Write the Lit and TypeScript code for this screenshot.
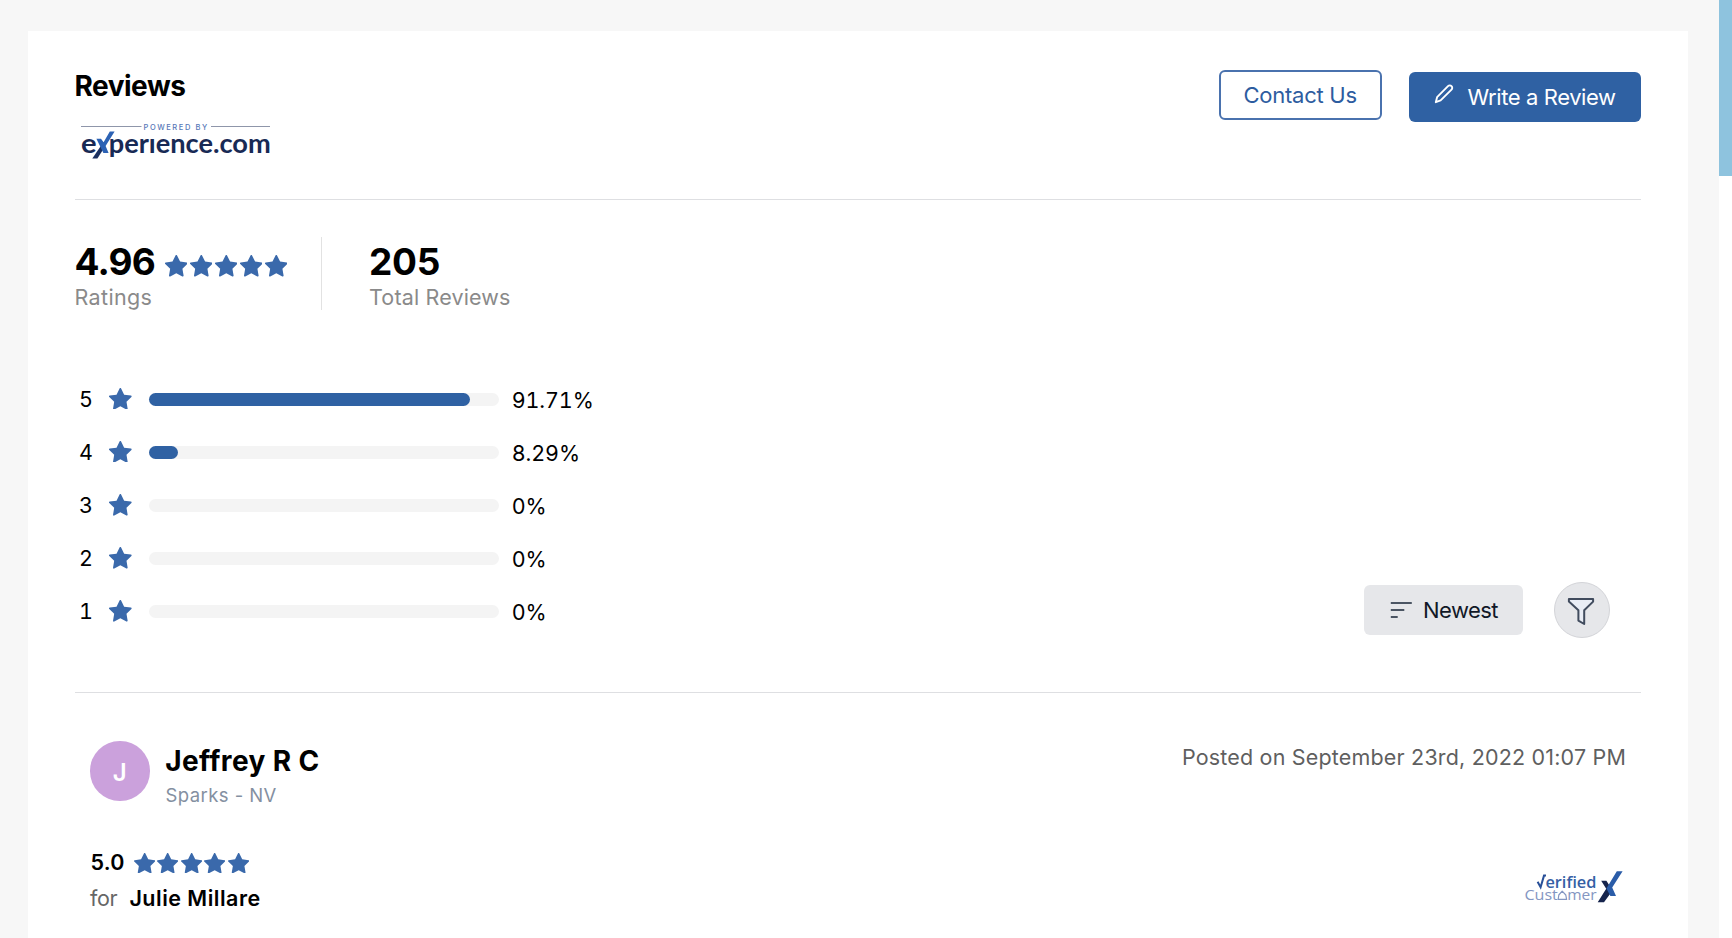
import { LitElement, html, css } from "lit";
import { customElement, property } from "lit/decorators.js";

const STAR_PATH =
  "M908.1 353.1l-253.9-36.9L540.7 86.1c-3.1-6.3-8.2-11.4-14.5-14.5-15.8-7.8-35-1.3-42.9 14.5L369.8 316.2l-253.9 36.9c-7 1-13.4 4.3-18.3 9.3a32.05 32.05 0 00.6 45.3l183.7 179.1-43.4 252.9a31.95 31.95 0 0046.4 33.7L512 754l227.1 119.4c6.2 3.3 13.4 4.4 20.3 3.2 17.4-3 29.1-19.5 26.1-36.9l-43.4-252.9 183.7-179.1c5-4.9 8.3-11.3 9.3-18.3 2.7-17.5-9.5-33.7-27-36.3z";

@customElement("star-row")
class StarRow extends LitElement {
  @property({ type: Number }) count = 1;
  static styles = css`
    :host { display: flex; gap: var(--star-gap, 0); }
    .star { display: block; width: var(--star-size, 22.7px); height: auto; fill: #3a69ab; }
  `;
  render() {
    return Array.from(
      { length: this.count },
      () => html`<svg class="star" viewBox="88 68 848 810"><path d=${STAR_PATH} /></svg>`
    );
  }
}

@customElement("experience-logo")
class ExperienceLogo extends LitElement {
  static styles = css`
    :host { display: block; }
    .logo { display: block; width: 192px; height: 42px; }
    .powered { font: 500 7.5px Inter, sans-serif; letter-spacing: 1.58px; fill: #5878b8; }
    .word { font: 700 26.5px Lato, sans-serif; fill: #182a55; }
    .rule { stroke: #8f96aa; stroke-width: 1; }
    .dark { fill: #1a2f60; }
    .blue { fill: #2c62b4; }
  `;
  render() {
    return html`
      <svg class="logo" viewBox="0 0 192 42">
        <path class="rule" d="M1 8.5H61.5M131 8.5H190" />
        <text class="powered" x="63.5" y="11.8">POWERED BY</text>
        <text class="word" x="1" y="34.8" textLength="15.6" lengthAdjust="spacingAndGlyphs">e</text>
        <text class="word" x="28.7" y="34.8" textLength="162" lengthAdjust="spacingAndGlyphs">perıence.com</text>
        <path class="dark" d="M12.3 40.5L21.8 26.5L24.4 29.5L17.4 40.5Z" />
        <path class="blue" d="M16.4 20.8H21L23.6 24.2L29.8 13.4H34.6L25.6 28L28.6 35H23.4Z" />
      </svg>
    `;
  }
}

@customElement("verified-badge")
class VerifiedBadge extends LitElement {
  static styles = css`
    :host { display: block; }
    .badge { display: block; width: 106px; height: 40px; }
    .verified { font: 600 16px "Open Sans", sans-serif; fill: #3560a5; }
    .customer { font: 400 14.5px "Open Sans", sans-serif; fill: #8496c2; }
    .check { fill: none; stroke: #284f98; stroke-width: 2; }
    .house { fill: none; stroke: #8496c2; stroke-width: 1.2; stroke-linejoin: round; }
    .dark { fill: #16244c; }
    .blue { fill: #2a5ca8; }
  `;
  render() {
    return html`
      <svg class="badge" viewBox="0 0 106 40">
        <path class="check" d="M17.6 14.8L20.6 20.2L24 8.6H26" />
        <text class="verified" x="25.4" y="21.3" textLength="51" lengthAdjust="spacingAndGlyphs">erified</text>
        <text class="customer" x="4.4" y="33" textLength="33.4" lengthAdjust="spacingAndGlyphs">Cust</text>
        <path class="house" d="M38.2 32.4H46.6L45.8 28L42.2 24.2L38.8 28Z" />
        <text class="customer" x="47.2" y="33" textLength="29.4" lengthAdjust="spacingAndGlyphs">mer</text>
        <path class="dark" d="M77.7 35.3L86.2 21.8L81.2 13.7H86.4L92.6 23.4L84 35.3Z" />
        <path class="blue" d="M86.4 21.4L96.8 4.3H102.6L92.2 20.6L96 29H90.4Z" />
      </svg>
    `;
  }
}

interface Bucket { stars: number; percent: number; }

@customElement("app-root")
class AppRoot extends LitElement {
  private buckets: Bucket[] = [
    { stars: 5, percent: 91.71 },
    { stars: 4, percent: 8.29 },
    { stars: 3, percent: 0 },
    { stars: 2, percent: 0 },
    { stars: 1, percent: 0 },
  ];

  static styles = css`
    :host {
      display: flex; height: 938px; overflow: hidden; background: #f7f7f7;
      font-family: Inter, "Liberation Sans", sans-serif; font-size: 21.5px; line-height: 26px; color: #000;
    }
    * { box-sizing: border-box; }
    .page { flex: 1; padding: 31px 31px 0 28px; }
    .card { height: 100%; background: #fff; padding: 0 47px 0 46.5px; }
    .rail { width: 13px; background: #fff; }
    .rail-mark { height: 176px; background: #8ec3de; }

    .header { display: flex; justify-content: space-between; height: 169px; padding-top: 38px; border-bottom: 1px solid #dedfe2; }
    .title { margin: 0; font-size: 28px; line-height: 34px; font-weight: 700; letter-spacing: -0.5px; }
    .logo { margin: 15px 0 0 5.5px; }
    .actions { display: flex; align-items: flex-start; gap: 26.5px; }
    .btn { display: flex; align-items: center; height: 50px; border-radius: 6px; font: inherit; font-size: 22px; padding: 0; }
    .contact { width: 163.5px; margin-top: 1px; padding-left: 23px; border: 2px solid #4a72ae; background: #fff; color: #2d5c9f; letter-spacing: -0.25px; }
    .write { width: 232.5px; margin-top: 3px; padding-left: 25px; border: 0; background: #2f61a3; color: #fff; letter-spacing: -0.4px; }
    .pen { width: 20px; height: 20px; margin: -7px 14px 0 0; fill: none; stroke: #fff; stroke-width: 1.9; stroke-linejoin: round; }

    .stats { display: flex; height: 73px; margin-top: 37px; }
    .stat { padding-top: 3px; }
    .stat.rating { width: 247px; border-right: 1.5px solid #e2e2e2; }
    .stat.total { padding-left: 47.5px; }
    .figure { display: flex; align-items: center; font-size: 37px; line-height: 44px; font-weight: 700; }
    .rating .figure { letter-spacing: -0.85px; }
    .total .figure { letter-spacing: -0.3px; }
    .figure star-row { margin: 8px 0 0 9.8px; --star-size: 22.6px; --star-gap: 2.4px; }
    .label { color: #8a8a8a; letter-spacing: 0.15px; line-height: 27px; }
    .rating .label { letter-spacing: 0.35px; }

    .breakdown { display: flex; justify-content: space-between; align-items: flex-end; margin-top: 63px; }
    .row { display: flex; align-items: center; height: 53.1px; font-variant-numeric: tabular-nums; }
    .num { width: 34.8px; padding-left: 4.6px; margin-top: -1px; }
    .row star-row { width: 39.7px; margin-top: -2px; }
    .track { width: 350px; height: 13px; border-radius: 6.5px; background: #f4f4f4; }
    .fill { height: 13px; border-radius: 6.5px; background: #2f61a3; }
    .pct { margin-left: 12.7px; letter-spacing: -0.1px; }
    .controls { display: flex; align-items: center; gap: 31px; padding-right: 31px; }
    .sort { width: 159px; padding-left: 26px; border: 0; background: #e6e7ea; color: #111827; letter-spacing: -0.55px; }
    .sort-icon { width: 22px; height: 18px; margin-right: 11.5px; stroke: #4b5563; stroke-width: 2.2; }
    .filter { display: grid; place-items: center; width: 56.5px; height: 56.5px; border-radius: 50%; border: 1.5px solid #d3d4d8; background: #e6e7ea; padding: 0; }
    .funnel { width: 30px; height: 30px; margin: 3px 1px 0 0; fill: #e9edf5; stroke: #414c5e; stroke-width: 2; stroke-linejoin: round; }
    .divider { height: 1px; margin-top: 54px; background: #dedfe2; }

    .review { padding: 48px 15px 0 15.5px; }
    .top { display: flex; justify-content: space-between; height: 108px; }
    .author { display: flex; gap: 15.7px; align-items: flex-start; }
    .avatar { display: grid; place-items: center; width: 59.5px; height: 59.5px; border-radius: 50%; background: #cba1dc; color: #fff; font-size: 24px; font-weight: 600; padding-top: 3px; }
    .name { margin: 3px 0 5px; font-size: 28px; line-height: 34px; font-weight: 700; letter-spacing: 0.37px; }
    .place { padding-left: .4px; font-size: 18.5px; line-height: 24px; color: #8490a1; letter-spacing: 0.42px; }
    .posted { margin-top: 3px; color: #5f5f5f; letter-spacing: 0.18px; }
    .bottom { display: flex; justify-content: space-between; }
    .score { display: flex; align-items: center; padding-left: .4px; font-weight: 600; letter-spacing: 0.25px; }
    .score star-row { margin: 1px 0 0 9px; --star-size: 21.3px; --star-gap: 2.2px; }
    .agent { display: flex; gap: 12px; margin-top: 10px; }
    .for { color: #666; letter-spacing: -0.3px; }
    .agent-name { font-weight: 600; letter-spacing: 0.49px; }
    .badge { margin: 18px 0 0; }
  `;

  render() {
    return html`
      <main class="page">
        <div class="card">
          <header class="header">
            <div>
              <h1 class="title">Reviews</h1>
              <experience-logo class="logo"></experience-logo>
            </div>
            <div class="actions">
              <button class="btn contact">Contact Us</button>
              <button class="btn write">
                <svg class="pen" viewBox="0 0 20 20"><path d="M1.8 18.2L3.1 13.2L14 2.2A2.35 2.35 0 0 1 17.5 5.7L6.6 16.4Z" /></svg>
                Write a Review
              </button>
            </div>
          </header>

          <section class="stats">
            <div class="stat rating">
              <div class="figure">4.96<star-row .count=${5}></star-row></div>
              <div class="label">Ratings</div>
            </div>
            <div class="stat total">
              <div class="figure">205</div>
              <div class="label">Total Reviews</div>
            </div>
          </section>

          <section class="breakdown">
            <div>
              ${this.buckets.map(
                (b) => html`
                  <div class="row">
                    <span class="num">${b.stars}</span>
                    <star-row></star-row>
                    <div class="track"><div class="fill" style="width:${b.percent}%"></div></div>
                    <span class="pct">${b.percent}%</span>
                  </div>
                `
              )}
            </div>
            <div class="controls">
              <button class="btn sort">
                <svg class="sort-icon" viewBox="0 0 22 18"><path d="M.8 2H21.8M.8 9H14.3M.8 16H7.7" /></svg>
                Newest
              </button>
              <button class="filter" aria-label="Filter">
                <svg class="funnel" viewBox="0 0 30 30"><path d="M2.9 2H27.1V4.6L18.2 13.2V27L12.4 23.6V13.2L2.9 4.6Z" /></svg>
              </button>
            </div>
          </section>
          <div class="divider"></div>

          <article class="review">
            <div class="top">
              <div class="author">
                <div class="avatar">J</div>
                <div>
                  <h2 class="name">Jeffrey R C</h2>
                  <div class="place">Sparks - NV</div>
                </div>
              </div>
              <div class="posted">Posted on September 23rd, 2022 01:07 PM</div>
            </div>
            <div class="bottom">
              <div>
                <div class="score">5.0<star-row .count=${5}></star-row></div>
                <div class="agent"><span class="for">for</span><span class="agent-name">Julie Millare</span></div>
              </div>
              <verified-badge class="badge"></verified-badge>
            </div>
          </article>
        </div>
      </main>
      <aside class="rail"><div class="rail-mark"></div></aside>
    `;
  }
}
